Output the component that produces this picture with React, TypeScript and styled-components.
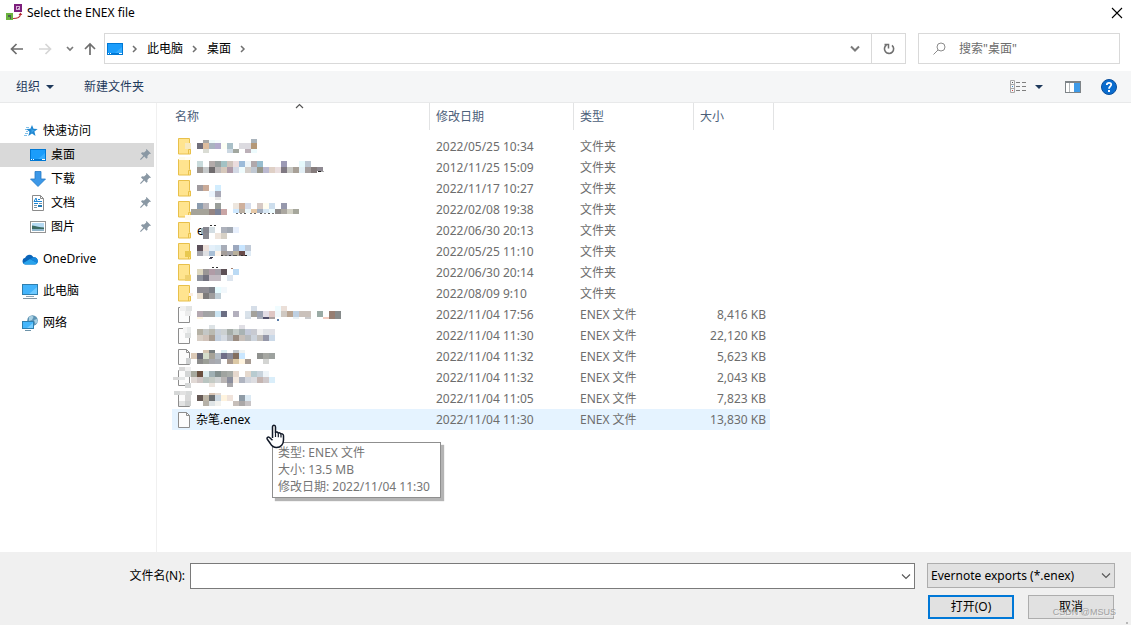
import React from 'react';
import styled, { createGlobalStyle } from 'styled-components';

const GlobalStyle = createGlobalStyle`
  *, *::before, *::after { box-sizing: border-box; }
  body {
    margin: 0;
    background: #fff;
    color: #000;
    font: 12px/16px "Noto Sans", "Noto Sans CJK SC", sans-serif;
  }
  button, input, select { font: inherit; color: inherit; border-radius: 0; }
  svg { display: block; flex: none; }
`;

/* ---------- layout ---------- */

const Dialog = styled.div`
  position: relative;
  display: flex;
  flex-direction: column;
  min-height: 100vh;
`;

const TitleBar = styled.header`
  display: flex;
  align-items: center;
  gap: 4px;
  height: 25px;
  padding: 0 8px 0 6px;
`;

const Title = styled.h1`
  flex: 1;
  margin: 0;
  font-size: 12px;
  font-weight: 400;
`;

const IconButton = styled.button<{ $w?: number }>`
  display: flex;
  align-items: center;
  justify-content: center;
  flex: none;
  width: ${(p) => (p.$w ? `${p.$w}px` : 'auto')};
  padding: 0;
  border: 0;
  background: none;
`;

const NavRow = styled.nav`
  display: flex;
  align-items: stretch;
  height: 46px;
  padding: 8px 11px 7px 10px;
`;

const NavButtons = styled.div`
  display: flex;
  align-items: center;
  gap: 16px;
  width: 94px;
`;

const RecentButtons = styled.div`
  display: flex;
  gap: 10px;
  margin-left: -2px;
`;

const AddressBar = styled.div`
  display: flex;
  flex: 1;
  align-items: stretch;
  border: 1px solid #d9d9d9;
`;

const Crumbs = styled.div`
  display: flex;
  flex: 1;
  align-items: center;
  gap: 9px;
  padding-left: 2px;
`;

const Crumb = styled.a`
  color: #000;
  text-decoration: none;
`;

const RefreshBox = styled.div`
  display: flex;
  width: 34px;
  justify-content: center;
  border-left: 1px solid #d9d9d9;
`;

const SearchBox = styled.label`
  display: flex;
  align-items: center;
  gap: 13px;
  width: 202px;
  margin-left: 12px;
  padding-left: 14px;
  border: 1px solid #d9d9d9;
`;

const SearchInput = styled.input`
  flex: 1;
  min-width: 0;
  padding: 0;
  border: 0;
  outline: 0;
  background: none;
  &::placeholder { color: #6d6d6d; opacity: 1; }
`;

const Toolbar = styled.div`
  display: flex;
  align-items: center;
  height: 32px;
  padding: 0 14px 0 16px;
  background: #f5f6f7;
  border-bottom: 1px solid #e8e9ea;
  color: #1e395b;
`;

const ToolButton = styled.button`
  display: flex;
  align-items: center;
  gap: 6px;
  margin-right: 30px;
  padding: 0;
  border: 0;
  background: none;
`;

const ToolSide = styled.div`
  display: flex;
  align-items: center;
  gap: 20px;
  margin-left: auto;
`;

const ViewButton = styled(ToolButton)`
  gap: 9px;
  margin-right: 2px;
`;

const Body = styled.div`
  display: flex;
  flex: 1;
`;

const Sidebar = styled.aside`
  flex: none;
  width: 157px;
  padding: 16px 2px 0 0;
  border-right: 1px solid #f0f0f0;
`;

const Group = styled.ul`
  margin: 0 0 8px;
  padding: 0;
  list-style: none;
`;

const Place = styled.a<{ $nested?: boolean; $active?: boolean }>`
  display: flex;
  align-items: center;
  gap: 5px;
  height: 24px;
  padding: 0 3px 0 ${(p) => (p.$nested ? 30 : 22)}px;
  background: ${(p) => (p.$active ? '#d9d9d9' : 'transparent')};
  color: #000;
  text-decoration: none;
`;

const PlaceName = styled.span`
  flex: 1;
`;

const Content = styled.main`
  flex: 1;
  padding-left: 15px;
`;

const FileTable = styled.table`
  width: 602px;
  table-layout: fixed;
  border-collapse: separate;
  border-spacing: 0;
  color: #6d6d6d;
`;

const HeadCell = styled.th<{ $w: number }>`
  position: relative;
  width: ${(p) => p.$w}px;
  height: 33px;
  padding: 0;
  vertical-align: top;
  text-align: left;
  font-weight: 400;
  color: #4c607a;
`;

const HeadLabel = styled.div<{ $pad: number }>`
  height: 27px;
  padding-left: ${(p) => p.$pad}px;
  line-height: 27px;
  border-right: 1px solid #e2e3e4;
`;

const SortMark = styled.svg`
  position: absolute;
  top: 0;
  left: 123px;
`;

const Cell = styled.td<{ $hover?: boolean }>`
  height: 21px;
  padding: 0 0 0 6px;
  white-space: nowrap;
  background: ${(p) => (p.$hover ? '#e5f3ff' : 'transparent')};
`;

const SizeCell = styled(Cell)`
  padding: 0 4px 0 0;
  border-right: 4px solid transparent;
  background-clip: padding-box;
  text-align: right;
`;

const NameBox = styled.div`
  position: relative;
  display: flex;
  align-items: center;
  gap: 6px;
  height: 21px;
  color: #000;
`;

const Mosaic = styled.svg`
  position: absolute;
  top: 0;
  left: -6px;
  overflow: visible;
`;

const Pointer = styled.svg`
  position: absolute;
  top: 15px;
  left: 88px;
  z-index: 2;
`;

const Tooltip = styled.div`
  position: absolute;
  top: 33px;
  left: 94px;
  z-index: 1;
  width: 169px;
  padding: 1px 0 2px 5px;
  border: 1px solid #8f8f8f;
  background: #fff;
  box-shadow: 3px 3px 1px #b4b4b4;
  color: #757575;
  line-height: 17px;
`;

const Footer = styled.footer`
  position: relative;
  display: flex;
  flex-direction: column;
  gap: 6px;
  padding: 11px 16px 6px 0;
  background: #f0f0f0;
`;

const FieldRow = styled.div`
  display: flex;
  align-items: stretch;
  height: 26px;
`;

const FieldLabel = styled.label`
  width: 190px;
  padding-right: 5px;
  text-align: right;
  line-height: 26px;
`;

const Combo = styled.div`
  display: flex;
  flex: 1;
  margin-right: 12px;
  border: 1px solid #7a7a7a;
  background: #fff;
`;

const ComboInput = styled.input`
  flex: 1;
  min-width: 0;
  padding: 0 4px;
  border: 0;
  outline: 0;
  background: none;
`;

const TypeBox = styled.div`
  position: relative;
  width: 188px;
  height: 25px;
`;

const TypeSelect = styled.select`
  width: 100%;
  height: 100%;
  padding: 0 20px 0 3px;
  appearance: none;
  border: 1px solid #adadad;
  background: #e1e1e1;
`;

const TypeArrow = styled.svg`
  position: absolute;
  top: 9px;
  right: 4px;
  pointer-events: none;
`;

const Actions = styled.div`
  display: flex;
  justify-content: flex-end;
  gap: 14px;
  padding-right: 1px;
`;

const ActionButton = styled.button<{ $primary?: boolean }>`
  width: 86px;
  height: 24px;
  padding: 0;
  border: ${(p) => (p.$primary ? '2px solid #0078d7' : '1px solid #adadad')};
  background: #e1e1e1;
`;

const Watermark = styled.span`
  position: absolute;
  right: 15px;
  bottom: 5px;
  color: #a0a0a0;
  font: 9px/16px "Liberation Sans", sans-serif;
  text-shadow: 1px 1px 0 #fff8;
  pointer-events: none;
`;

const Grip = styled.i`
  position: absolute;
  right: 3px;
  bottom: 1px;
  width: 2px;
  height: 2px;
  background: #b8b8b8;
`;

/* ---------- icons ---------- */

const AppIcon = () => (
  <svg width="17" height="17" viewBox="0 0 17 17">
    <rect x="8" y="0" width="8" height="8" fill="#7d1f7c" />
    <rect x="10" y="2" width="4" height="4" fill="#d9b3d9" />
    <path d="M11 3h2v1h-1v1h-1z" fill="#7d1f7c" />
    <rect x="0" y="9" width="7" height="7" fill="#6cb33f" />
    <path d="M2 11h3v4H4v-2H2z" fill="#4b5b52" />
    <path d="M7 14.500c4 0 7-1 7.500-4" fill="none" stroke="#b52a32" strokeWidth="1.200" />
    <path d="M12.500 11l2-2.500 1.800 2.500z" fill="#b52a32" />
  </svg>
);

const CloseIcon = () => (
  <svg width="12" height="12" viewBox="0 0 12 12">
    <path d="M1 1l10 10M11 1L1 11" stroke="#000" strokeWidth="1.100" />
  </svg>
);

const Arrow = ({ d, color, w }: { d: string; color: string; w: number }) => (
  <svg width={w} height="14" viewBox={`0 0 ${w} 14`}>
    <path d={d} fill="none" stroke={color} strokeWidth="1.700" />
  </svg>
);

const CrumbSep = () => (
  <svg width="6" height="8" viewBox="0 0 6 8">
    <path d="M1 1l3 3-3 3" fill="none" stroke="#707070" strokeWidth="1.500" />
  </svg>
);

const Chevron = ({ bold }: { bold?: boolean }) => (
  <svg width="10" height="7" viewBox="0 0 10 7">
    <path d="M1 1.500l4 4 4-4" fill="none" stroke={bold ? '#7a7a7a' : '#555'} strokeWidth={bold ? 2 : 1.1} />
  </svg>
);

const Caret = () => (
  <svg width="8" height="4" viewBox="0 0 8 4">
    <path d="M0 0h8L4 4z" fill="#1e395b" />
  </svg>
);

const DesktopIcon = () => (
  <svg width="16" height="12" viewBox="0 0 16 12">
    <rect width="16" height="12" fill="#0078d4" />
    <rect x="1" y="1" width="14" height="9" fill="#1b9dfb" />
    <path d="M8 10l7-6v6z" fill="#36adff" />
    <path d="M1 10.500h1M3 10.500h1M12 10.500h3" stroke="#fff" />
  </svg>
);

const StarIcon = () => (
  <svg width="16" height="14" viewBox="0 0 16 14">
    <path d="M10 1l1.500 3.700 4.200.3-3.300 2.600 1.100 4.400-3.500-2.400-3.700 2.400 1.200-4.300-3.200-2.700 4.100-.3z" fill="#1f86d0" />
    <path d="M9.500 4l1.100 1.900 2.700.3-2.300 1.400L9.500 9z" fill="#3fa4ea" />
    <path d="M4 3.500h3M3 5.500h2M4 7.500h2M3 9.500h3M2 11.500h3" stroke="#62b0e2" strokeWidth=".8" />
  </svg>
);

const DownloadIcon = () => (
  <svg width="16" height="16" viewBox="0 0 16 16">
    <path d="M5 .5h6V8h4.500L8 15.500.5 8H5z" fill="#3c98e8" stroke="#2478c4" strokeWidth=".8" />
  </svg>
);

const DocumentIcon = () => (
  <svg width="16" height="16" viewBox="0 0 16 16">
    <path d="M2.500.5h8l3 3v12h-11z" fill="#fff" stroke="#8b8b8b" />
    <path d="M10.500.5v3h3" fill="none" stroke="#8b8b8b" />
    <path d="M4 6.500l2-3.500 1 3.500M8 4.500h2M4 6.500h8M4 8.500h4" fill="none" stroke="#1d86d4" />
    <path d="M4 10.500h3M4 12.500h3M9 8.500h3" stroke="#7b94a5" />
    <rect x="8" y="10" width="4" height="2" fill="#1f78b4" />
  </svg>
);

const PictureIcon = () => (
  <svg width="16" height="12" viewBox="0 0 16 12">
    <rect x=".5" y=".5" width="15" height="11" fill="#fff" stroke="#949494" />
    <rect x="2" y="2" width="12" height="8" fill="#b5daf3" />
    <path d="M2 4.500c4 .5 8 2 12 2V8H2z" fill="#3c6b63" />
    <path d="M2 8h12v2H2z" fill="#8fb4ca" />
  </svg>
);

const CloudIcon = () => (
  <svg width="16" height="11" viewBox="0 0 16 11">
    <path d="M3.500 10.500a3.400 3.400 0 01-.3-6.700C4.600.6 9-.9 11.500 3.300c2.500-.3 4.500 1.500 4.300 4-.1 2-1.500 3.200-3.300 3.200z" fill="#0a64b8" />
    <path d="M1 9.300l7-4.200 7.400 3.900c-.6 1-1.600 1.500-2.900 1.500h-9C2.500 10.500 1.500 10 1 9.300z" fill="#29a3ec" />
    <path d="M8 5l3.500-1.700c2.500-.3 4.500 1.500 4.300 4l-.4 1.700z" fill="#1587dc" />
  </svg>
);

const ComputerIcon = () => (
  <svg width="16" height="15" viewBox="0 0 16 15">
    <rect x=".5" y=".5" width="15" height="10" fill="#43b4fb" stroke="#2f7fae" />
    <path d="M7 10l8-7v7z" fill="#6fcaff" />
    <path d="M4 12.500h8" stroke="#8fa3b0" />
    <path d="M1 14.500h14" stroke="#8296a3" />
  </svg>
);

const NetworkIcon = () => (
  <svg width="16" height="16" viewBox="0 0 16 16">
    <circle cx="10.500" cy="5.500" r="5.300" fill="#5e94b4" />
    <path d="M7 2c2-1.500 4-1 4.500 0L10 5l-3 1zM12 5l3-1 .5 3-2 2z" fill="#a9d0e3" />
    <rect x=".5" y="6.500" width="11" height="7" fill="#45b6fb" stroke="#2f7fae" />
    <path d="M5 13l6-5v5z" fill="#78ceff" />
    <path d="M3 15.500h6" stroke="#6d93a9" />
  </svg>
);

const PinIcon = () => (
  <svg width="11" height="12" viewBox="0 0 11 12">
    <path d="M6.500 0l4.500 4.500-1 .5-.6-.2-2 2.200.2 1.700-1.200 1L4.300 7.600 .8 11 0 10.200l3.300-3.500L1 4.500l1-1.200 2 .2 2.300-2L6 .8z" fill="#8a98a4" />
  </svg>
);

const FolderIcon = () => (
  <svg width="13" height="17" viewBox="0 0 13 17">
    <path d="M.5.5h11v10l1 .5v5H.5z" fill="#ffe48f" stroke="#e8c04a" />
    <path d="M10.500 16v-4.500h2" fill="none" stroke="#e8c04a" />
  </svg>
);

const FileIcon = () => (
  <svg width="12" height="16" viewBox="0 0 12 16">
    <path d="M.5.5h8l3 3v12H.5z" fill="#fcfcfc" stroke="#8d8d8d" />
    <path d="M8.500.5v3h3" fill="none" stroke="#8d8d8d" />
  </svg>
);

const HandPointer = () => (
  <Pointer width="19" height="25" viewBox="0 0 19 25" aria-hidden="true">
    <path
      d="M6.500 14V3c0-2.400 3-2.400 3 0v5.500c1-1 2.500-.5 2.700.7 1-.8 2.400-.2 2.600.9 1.200-.6 2.700 0 2.700 1.600V16c0 4-2.500 7.500-7 7.500-4 0-5-2-6.500-4.500L1.300 15.200c-.9-1.800.9-2.800 2.200-1.700l3 2.700"
      fill="#fff"
      stroke="#111827"
      strokeWidth="1.500"
      strokeLinejoin="round"
    />
    <path d="M9.500 8v5M12.300 9.500v3.800M15 10.500v3" stroke="#111827" strokeWidth="1.200" />
  </Pointer>
);

/* ---------- data ---------- */

const CELL = 6;

/* A strip of censor blocks: left edge, top, height, one colour per block ("-" leaves a gap), block width. */
type Strip = [number, number, number, string, number?];

interface Entry {
  date: string;
  size?: string;
  name?: string;
  strips?: Strip[];
  remnant?: string;
}

const entries: Entry[] = [
  {
    date: '2022/05/25 10:34',
    strips: [
      [13, 7, 6, 'f7e9c0'],
      [31, 4, 3, 'aaa9a7 effafa f6fcfc - - - - - aab4bc'],
      [25, 7, 6, '716f7b ddbd9e a9b4c0 b2aacb fdfff5 aac0c8 - dcdbe0 dcdae0 b49878'],
      [79, 3, 4, 'aab4bc'],
      [31, 13, 4, 'dadcd4 - - - ccd8e2 a2a79f - bcb0b8 edfbfd'],
    ],
  },
  {
    date: '2012/11/25 15:09',
    strips: [
      [7, 0, 3, 'fffbe8 fffdf2'],
      [25, 4, 6, 'c8dadb - b3abaa 99a09f a3c2c4 d0c4bc ebdcdd 9cbbd9 eef5f8 b0a8ab 97bdcf - - - 9c9ab5 - - e6f9fc bcc7d3'],
      [25, 10, 6, '9b9591 c6c9ca 6f6b6d bcb8b8 d6c8bb ae9aa8 d3d9e5 f0fcfd d3cdc8 c0c8d2 98978a bbb9d0 dfd0c6 eadedf 7f7982 c8c8c3 a8a097 e3eff5 a49d9c 857c7c'],
      [145, 10, 4, '8f8a92'],
      [146, 14, 1, '222222 aaaaaa', 3],
    ],
  },
  {
    date: '2022/11/17 10:27',
    strips: [
      [25, 7, 6, 'a09b9f cbab98 - d2edfe'],
      [37, 13, 6, 'ecf5fe a8a8b6'],
      [43, 19, 3, 'e8e8e8'],
    ],
  },
  {
    date: '2022/02/08 19:38',
    strips: [
      [25, 4, 6, '8b9caf bab6bb - 9a9e9a - - ede6de cfb09c d5dbe9 - d6c9c4 fffdf0 cddeed - 9698ac'],
      [19, 10, 6, 'a5a399 a5a399 a5a399 958481 7c8499 c9a5a5'],
      [61, 10, 4, 'cee8ff bbb0a3 ecf8fc e5c8a7 a3afc0 d8e8f5 ecfafe'],
      [103, 10, 5, '8f8d8c aba7a0 d2d1c5 a6a79c'],
      [64, 14, 1, '666666 - 888888 - 555555 - - 777777 - 666666 - - 555555 - 888888 - 555555 - 777777', 2],
      [13, 16, 5, 'fffaf0'],
    ],
  },
  {
    date: '2022/06/30 20:13',
    remnant: 'e',
    strips: [
      [38, 5, 1, '333333 - 333333', 2],
      [29, 8, 6, '9cb0b8', 2],
      [31, 7, 6, '86868f d3dde2 - aeb2bc a2a9b3 e8f0fd'],
      [31, 13, 6, '8b8a91 - efe5dc d6d0c5'],
    ],
  },
  {
    date: '2022/05/25 11:10',
    strips: [
      [13, 10, 6, 'e8c850'],
      [25, 4, 6, '5b4f59 ede1db e4f0fa dcecf6 a8adb8 - 9ca8be c8e5ff c0cad8'],
      [25, 10, 5, 'a3a3ab dfe0e3 a9bfd6 fdf4ea a49d99 a3a2a8 b9b09c 694b49 dfebf5'],
      [49, 14, 1, '333333 - 777777 - 333333 - 555555 555555 - 777777 333333 - 222222', 2],
      [38, 16, 1, '333344', 3],
      [37, 17, 1, '555566', 3],
    ],
  },
  {
    date: '2022/06/30 20:14',
    strips: [
      [13, 13, 6, 'efd070'],
      [40, 5, 1, '333333 - 333333', 2],
      [59, 6, 1, 'a08070', 2],
      [25, 7, 6, 'dcd6be 9a9695 b09ca6 a5a1a9 5d5055 - bbdaf4'],
      [25, 13, 6, '8f939d 72727e c2bac1 c2bac1 - dde5ee'],
    ],
  },
  {
    date: '2022/08/09 9:10',
    strips: [
      [25, 4, 6, '8d8b92 8e8c92 7b7f87 e6fcff f2f8fc'],
      [25, 10, 6, 'eadfcf 7d7b7b 9e9d9d c0ced6'],
      [17, 10, 3, 'fbeee0', 4],
    ],
  },
  {
    date: '2022/11/04 17:56',
    size: '8,416 KB',
    strips: [
      [8, 2, 5, 'f0f0f0 e2e4e4'],
      [13, 7, 5, 'ececec'],
      [79, 2, 5, 'd6dee8 - - - f0fcff ebdfd8'],
      [25, 7, 6, 'b5a9b1 a3a3a5 a3a5a4 cbe5f3 6b6e83 - b3b0bd - d9e2ea a4a29c 9da4b3 e3dde5 dfc7c4 eff8fb cfc8c1 b9a593 bed0e2 cac1bb cac1bb - 9aaba5 - 967e72 868a8a'],
      [25, 13, 2, 'fff5e0 - - - - - - - d5dde5 - acb0bb 52506b a8a0a0 - - - e8f1f6 - c9c9cb - - f3cdc0 967e72 868a8a'],
      [105, 15, 2, '5a7ca8', 2],
    ],
  },
  {
    date: '2022/11/04 11:30',
    size: '22,120 KB',
    strips: [
      [11, 2, 6, 'f5f5f5 e9ebeb', 4],
      [13, 8, 5, 'dddfdf'],
      [37, 0, 4, 'dde3e6 - - - - e0dfe5'],
      [25, 4, 6, 'b5b1a5 c4c7c6 babab2 c8cfd8 ccd1d2 a6ada8 c3cbc8 a9b3b4 c3c9d8 c8cad1 f0f0f1 e0e2e6 e1e1e6'],
      [25, 10, 6, 'd7cec5 d0c2b9 a99d92 c2cedd d4dae2 b6b9bd 9a8c81 c7bfb9 b7babd ccd3dc c2bfbc 9597a8 cbd9e8'],
    ],
  },
  {
    date: '2022/11/04 11:32',
    size: '5,623 KB',
    strips: [
      [14, 12, 6, 'cfd1d2', 5],
      [31, 4, 3, 'd6c6b2 797f80 - dbeef2 - c3c8cc eef2f2'],
      [19, 7, 6, 'dccab7 686876 d4dcc9 a6a297 b5bdc6 6f6e87 8a8c9a 836f5f cae7ff - - 8f918e a6a7a2 9da29f'],
      [25, 13, 5, '8d8d8c 9c9f98 a8a8ad a8acb3 - a8998e dcc9a6 fff4df a79b92 - - d4d5d3'],
    ],
  },
  {
    date: '2022/11/04 11:32',
    size: '2,043 KB',
    strips: [
      [7, 0, 4, 'd8d8d8 f0f0f0'],
      [13, 4, 6, 'd4d6d6'],
      [1, 10, 3, 'd8d8d8 e4e6e6'],
      [13, 16, 5, 'd5d7d7'],
      [19, 4, 6, 'a7a99e 6a5040 dcecee a0b0b4 84908f a0a4a0 a8aca8 e6d8cd - e5d9ce b8cbd0 c8d3dc eef4f8'],
      [19, 10, 6, 'e1d9d5 d0c6c5 b9c5c1 c5cbc5 d0d3d4 b9b5b4 8b8e9d f3e9e0 afb4c0 d2d6de dddde1 c5b5b1 cfc9cb daeefa'],
      [37, 16, 4, 'ece5df - - a9a8ab'],
    ],
  },
  {
    date: '2022/11/04 11:05',
    size: '7,823 KB',
    strips: [
      [2, 3, 4, 'd5d7d7 e2e2e2 d8dada'],
      [13, 7, 6, 'd8d8d8'],
      [7, 13, 5, 'e2e3e3 cdcfcf'],
      [37, 5, 2, 'd9c5b4 e6dcd4'],
      [25, 7, 6, '655955 bdb5a6 6c6f71 ccd8e2 fff4df f0e3db - 8f9ba6 dceaf4'],
      [31, 13, 5, 'b6b1a8 dfe4e6 f2f2ef - - c7bfba aba8a8 c8c4c6'],
    ],
  },
  { date: '2022/11/04 11:30', size: '13,830 KB', name: '杂笔.enex' },
];

const pinned = [
  { name: '桌面', icon: <DesktopIcon />, active: true },
  { name: '下载', icon: <DownloadIcon /> },
  { name: '文档', icon: <DocumentIcon /> },
  { name: '图片', icon: <PictureIcon /> },
];

const roots = [
  { name: 'OneDrive', icon: <CloudIcon /> },
  { name: '此电脑', icon: <ComputerIcon /> },
  { name: '网络', icon: <NetworkIcon /> },
];

const Censor = ({ strips }: { strips: Strip[] }) => (
  <Mosaic width="180" height="21" aria-hidden="true" shapeRendering="crispEdges">
    {strips.map(([x, y, h, colors, w = CELL], s) =>
      colors.split(' ').map((c, i) =>
        c === '-' ? null : <rect key={`${s}-${i}`} x={x + i * w} y={y} width={w} height={h} fill={`#${c}`} />
      )
    )}
  </Mosaic>
);

const Row = ({ entry }: { entry: Entry }) => {
  const hover = Boolean(entry.name);
  return (
    <tr>
      <Cell $hover={hover}>
        <NameBox>
          {entry.size ? <FileIcon /> : <FolderIcon />}
          {entry.name ?? entry.remnant}
          {entry.strips && <Censor strips={entry.strips} />}
          {hover && (
            <>
              <Tooltip role="tooltip">
                <div>类型: ENEX 文件</div>
                <div>大小: 13.5 MB</div>
                <div>修改日期: 2022/11/04 11:30</div>
              </Tooltip>
              <HandPointer />
            </>
          )}
        </NameBox>
      </Cell>
      <Cell $hover={hover}>{entry.date}</Cell>
      <Cell $hover={hover}>{entry.size ? 'ENEX 文件' : '文件夹'}</Cell>
      <SizeCell $hover={hover}>{entry.size}</SizeCell>
    </tr>
  );
};

export default function App() {
  return (
    <Dialog>
      <GlobalStyle />
      <TitleBar>
        <AppIcon />
        <Title>Select the ENEX file</Title>
        <IconButton aria-label="关闭"><CloseIcon /></IconButton>
      </TitleBar>

      <NavRow>
        <NavButtons>
          <IconButton aria-label="后退"><Arrow w={13} color="#6e6e6e" d="M13 7H2M6.500 2L1.500 7l5 5" /></IconButton>
          <IconButton aria-label="前进"><Arrow w={13} color="#d6d6d6" d="M0 7h11M6.500 2l5 5-5 5" /></IconButton>
          <RecentButtons>
            <IconButton aria-label="最近位置"><Arrow w={8} color="#7a7a7a" d="M1 5l3 3 3-3" /></IconButton>
            <IconButton aria-label="上移"><Arrow w={12} color="#6e6e6e" d="M6 13V2M1 7l5-5 5 5" /></IconButton>
          </RecentButtons>
        </NavButtons>
        <AddressBar>
          <Crumbs>
            <DesktopIcon />
            <CrumbSep />
            <Crumb href="#pc">此电脑</Crumb>
            <CrumbSep />
            <Crumb href="#desktop">桌面</Crumb>
            <CrumbSep />
          </Crumbs>
          <IconButton $w={32} aria-label="展开"><Chevron bold /></IconButton>
          <RefreshBox>
            <IconButton aria-label="刷新">
              <svg width="12" height="12" viewBox="0 0 12 12">
                <path d="M3 2.300A4.600 4.600 0 108.500 2" fill="none" stroke="#707070" strokeWidth="1.600" transform="matrix(-1 0 0 1 12 0)" />
                <path d="M1.500 1.500h4v4" fill="none" stroke="#707070" strokeWidth="1.500" />
              </svg>
            </IconButton>
          </RefreshBox>
        </AddressBar>
        <SearchBox>
          <svg width="13" height="13" viewBox="0 0 13 13">
            <circle cx="8" cy="5" r="4" fill="none" stroke="#8c8c8c" />
            <path d="M5 8L.5 12.500" stroke="#8c8c8c" />
          </svg>
          <SearchInput type="search" placeholder={'搜索"桌面"'} aria-label="搜索" />
        </SearchBox>
      </NavRow>

      <Toolbar>
        <ToolButton>组织<Caret /></ToolButton>
        <ToolButton>新建文件夹</ToolButton>
        <ToolSide>
          <ViewButton aria-label="更改视图">
            <svg width="16" height="13" viewBox="0 0 16 13">
              <path d="M.5.5h4v12h-4zM.5 4.500h4M.5 8.500h4" fill="none" stroke="#a8a8a8" />
              <path d="M6 2.500h4M12 2.500h4M6 6.500h4M12 6.500h4M6 10.500h4M12 10.500h4" stroke="#7f7f7f" />
              <path d="M2 2.500h1" stroke="#555" />
              <path d="M2 6.500h1" stroke="#2f84c8" />
              <path d="M2 10.500h1" stroke="#d04040" />
            </svg>
            <Caret />
          </ViewButton>
          <IconButton aria-label="预览窗格">
            <svg width="16" height="12" viewBox="0 0 16 12">
              <rect x=".5" y=".5" width="15" height="11" fill="#fff" stroke="#7e8488" />
              <path d="M0 1h16" stroke="#7e8488" strokeWidth="2" />
              <path d="M4.500 2v9" stroke="#b4b8ba" />
              <rect x="9" y="2" width="6" height="9" fill="#3f9be8" />
            </svg>
          </IconButton>
          <IconButton aria-label="帮助">
            <svg width="16" height="16" viewBox="0 0 16 16">
              <circle cx="8" cy="8" r="7.500" fill="#0a6cce" stroke="#0b4f9c" />
              <path d="M5.800 6c0-3 4.600-2.800 4.400-.2C10.100 7.400 8 7.600 8 9.800" fill="none" stroke="#fff" strokeWidth="1.800" />
              <rect x="7" y="11" width="2" height="2" fill="#fff" />
            </svg>
          </IconButton>
        </ToolSide>
      </Toolbar>

      <Body>
        <Sidebar>
          <Group>
            <li><Place href="#quick"><StarIcon /><PlaceName>快速访问</PlaceName></Place></li>
            {pinned.map((p) => (
              <li key={p.name}>
                <Place href="#pinned" $nested $active={p.active}>
                  {p.icon}
                  <PlaceName>{p.name}</PlaceName>
                  <PinIcon />
                </Place>
              </li>
            ))}
          </Group>
          {roots.map((r) => (
            <Group key={r.name}>
              <li><Place href="#root">{r.icon}<PlaceName>{r.name}</PlaceName></Place></li>
            </Group>
          ))}
        </Sidebar>

        <Content>
          <FileTable>
            <thead>
              <tr>
                <HeadCell $w={258}>
                  <HeadLabel $pad={3}>名称</HeadLabel>
                  <SortMark width="9" height="6" viewBox="0 0 9 6">
                    <path d="M1 5l3.500-3.500L8 5" fill="none" stroke="#555" strokeWidth="1.200" />
                  </SortMark>
                </HeadCell>
                <HeadCell $w={144}><HeadLabel $pad={6}>修改日期</HeadLabel></HeadCell>
                <HeadCell $w={120}><HeadLabel $pad={6}>类型</HeadLabel></HeadCell>
                <HeadCell $w={80}><HeadLabel $pad={6}>大小</HeadLabel></HeadCell>
              </tr>
            </thead>
            <tbody>
              {entries.map((e, i) => <Row key={i} entry={e} />)}
            </tbody>
          </FileTable>
        </Content>
      </Body>

      <Footer>
        <FieldRow>
          <FieldLabel htmlFor="filename">文件名(N):</FieldLabel>
          <Combo>
            <ComboInput id="filename" type="text" />
            <IconButton $w={16} aria-label="历史记录"><Chevron /></IconButton>
          </Combo>
          <TypeBox>
            <TypeSelect aria-label="文件类型" defaultValue="enex">
              <option value="enex">Evernote exports (*.enex)</option>
            </TypeSelect>
            <TypeArrow width="10" height="7" viewBox="0 0 10 7">
              <path d="M1 1.500l4 4 4-4" fill="none" stroke="#555" strokeWidth="1.100" />
            </TypeArrow>
          </TypeBox>
        </FieldRow>
        <Actions>
          <ActionButton $primary>打开(O)</ActionButton>
          <ActionButton>取消</ActionButton>
        </Actions>
        <Watermark>CSDN @MSUS</Watermark>
        <Grip />
      </Footer>
    </Dialog>
  );
}
